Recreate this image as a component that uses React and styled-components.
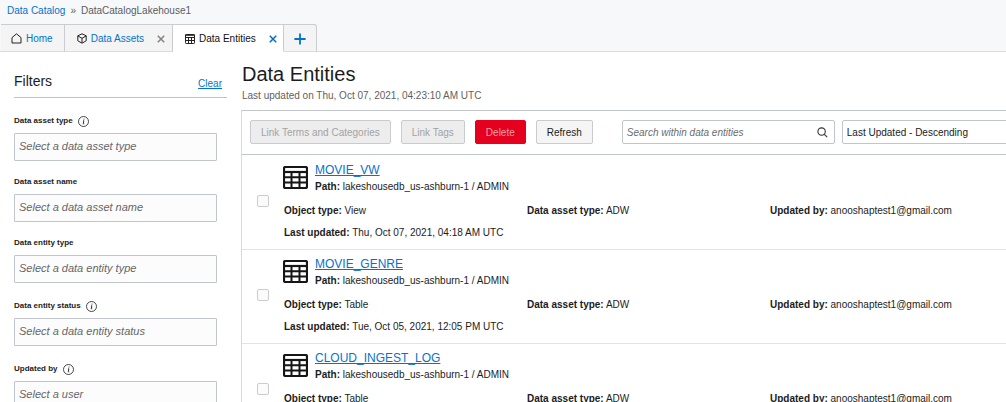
import React from "react";
import styled, { createGlobalStyle, css } from "styled-components";

const GlobalStyle = createGlobalStyle`
  *, *::before, *::after { box-sizing: border-box; }
  body {
    margin: 0;
    background: #ffffff;
    color: #1c1c1c;
    font: 10px/16px "Liberation Sans", Arial, sans-serif;
  }
  button, input, select { font: inherit; color: inherit; margin: 0; }
`;

const Page = styled.div`
  display: flex;
  flex-direction: column;
  height: 100vh;
  overflow: hidden;
`;

const Header = styled.header`
  background: #f6f8fa;
`;

const Breadcrumb = styled.nav`
  display: flex;
  gap: 5px;
  height: 24px;
  padding: 3px 7px 0;
  color: #5c5c5c;
`;

const Link = styled.a`
  color: #0572ce;
  text-decoration: ${(p) => (p.$underlined ? "underline" : "none")};
`;

const TabBar = styled.div`
  display: flex;
  height: 28px;
  padding-left: 1px;
  border-bottom: 1px solid #d9dbde;
`;

const Tab = styled.div`
  display: flex;
  align-items: center;
  height: 28px;
  padding: 1px ${(p) => p.$end || 11}px 0 ${(p) => p.$start || 10}px;
  background: #f4f4f4;
  border: 1px solid #c9ccd1;
  border-left: 0;
  border-bottom-color: #d9dbde;
  &:last-child {
    border-top-right-radius: 3px;
  }
  ${(p) =>
    p.$active &&
    css`
      background: #ffffff;
      border-bottom-color: #ffffff;
    `}
`;

const TabButton = styled.button`
  display: flex;
  align-items: center;
  gap: 4px;
  padding: 0;
  border: 0;
  background: none;
  color: ${(p) => (p.$active ? "#111111" : "#0572ce")};
  svg { color: #222222; }
`;

const IconButton = styled.button`
  display: flex;
  align-items: center;
  padding: 0;
  border: 0;
  background: none;
  color: ${(p) => p.$color || "#0572ce"};
  margin-left: ${(p) => p.$gap || 0}px;
`;

const Content = styled.div`
  display: flex;
  flex: 1;
  min-height: 0;
`;

const Sidebar = styled.aside`
  flex: 0 0 227px;
  padding: 18px 0 0 14px;
`;

const FiltersHead = styled.div`
  display: flex;
  justify-content: space-between;
  align-items: flex-end;
  height: 28px;
  padding: 0 5px 5px 0;
  border-bottom: 1px solid #bfc2c7;
  margin-bottom: 15px;
`;

const FiltersTitle = styled.h2`
  margin: 0;
  font-size: 14px;
  line-height: 22px;
  font-weight: 400;
`;

const Field = styled.div`
  margin-right: 10px;
  padding-bottom: ${(p) => p.$space || 13}px;
`;

const FieldLabel = styled.label`
  display: flex;
  align-items: center;
  gap: 5px;
  height: 16px;
  margin-bottom: 4px;
  font-size: 8px;
  font-weight: 700;
`;

const FieldInput = styled.input`
  display: block;
  width: 100%;
  height: 28px;
  padding: 0 4px 2px;
  border: 1px solid #c1c6cc;
  border-radius: 1px;
  background: #fcfcfc;
  font-size: 11px;
  &::placeholder { color: #666666; font-style: italic; opacity: 1; }
`;

const Main = styled.main`
  display: flex;
  flex-direction: column;
  flex: 1;
  min-width: 0;
  padding: 10px 0 0 14px;
`;

const Title = styled.h1`
  margin: 0;
  padding-left: 1px;
  font-size: 20px;
  line-height: 24px;
  font-weight: 400;
`;

const Subtitle = styled.p`
  margin: 0;
  padding: 2px 0 6px 1px;
  color: #5f5f5f;
`;

const Panel = styled.section`
  flex: 1;
  min-height: 0;
  border-top: 1px solid #c1c6cc;
  border-left: 1px solid #d5d9de;
`;

const Toolbar = styled.div`
  display: flex;
  gap: 10px;
  padding: 9px 0 10px 8px;
  border-bottom: 1px solid #c1c6cc;
`;

const tones = {
  plain: css`background: #f5f5f5; border-color: #c8ccd1; color: #1c1c1c;`,
  muted: css`background: #ededed; border-color: #c8ccd1; color: #a3a3a3;`,
  danger: css`background: #e5001f; border-color: #e5001f; color: #f2a0a8;`,
};

const Button = styled.button`
  flex: none;
  height: 24px;
  padding: 1px 10px 0;
  border: 1px solid;
  border-radius: 2px;
  white-space: nowrap;
  ${(p) => tones[p.$tone || "plain"]}
`;

const SearchGroup = styled.div`
  display: flex;
  flex: none;
  gap: 7px;
  margin-left: 19px;
`;

const SearchBox = styled.div`
  display: flex;
  align-items: center;
  width: 213px;
  height: 24px;
  padding: 0 6px 0 4px;
  border: 1px solid #c1c6cc;
  border-radius: 2px;
  background: #ffffff;
`;

const SearchInput = styled.input`
  flex: 1;
  min-width: 0;
  padding: 1px 0 0;
  border: 0;
  outline: 0;
  background: none;
  &::placeholder { color: #6b6b6b; font-style: italic; opacity: 1; }
`;

const SortSelect = styled.select`
  flex: none;
  width: 213px;
  height: 24px;
  padding: 1px 4px 0;
  border: 1px solid #c1c6cc;
  border-radius: 2px;
  background: #ffffff;
  appearance: none;
`;

const EntityList = styled.ul`
  margin: 0;
  padding: 1px 0 0;
  list-style: none;
`;

const EntityRow = styled.li`
  display: flex;
  align-items: center;
  height: 94px;
  padding: 0 0 4px 15px;
  border-bottom: 1px solid #e1e3e5;
`;

const Checkbox = styled.input`
  appearance: none;
  flex: none;
  width: 12px;
  height: 12px;
  margin: 0 14px 0 0;
  border: 1px solid #cccccc;
  border-radius: 2px;
  background: #fbfbfb;
`;

const Entity = styled.div`
  flex: 1;
  min-width: 0;
`;

const EntityHead = styled.div`
  display: flex;
  align-items: center;
  gap: 7px;
  height: 34px;
`;

const EntityName = styled.h3`
  margin: 0;
  font-size: 12px;
  line-height: 18px;
  font-weight: 400;
`;

const Details = styled.div`
  display: grid;
  grid-template-columns: repeat(3, 243px);
  row-gap: 6px;
  padding: 8px 0 0 1px;
  white-space: nowrap;
`;

const HomeIcon = () => (
  <svg width="11" height="11" viewBox="0 0 11 11" fill="none" stroke="currentColor" strokeLinejoin="round">
    <path d="M1 4.6 5.5.8 10 4.6V10H1z" />
  </svg>
);

const CubeIcon = () => (
  <svg width="10" height="11" viewBox="0 0 10 11" fill="none" stroke="currentColor" strokeWidth="1" strokeLinejoin="round">
    <path d="M5 .8 9.2 2.8V7.8L5 10.2.8 7.8V2.8zM.8 2.9 5 5.3 9.2 2.9M5 5.3V10" />
  </svg>
);

const TableIcon = ({ small }) =>
  small ? (
    <svg width="10" height="10" viewBox="0 0 10 10" fill="none" stroke="currentColor" strokeWidth="1">
      <rect x=".5" y=".5" width="9" height="9" rx=".7" />
      <path d="M0 1.2H10" strokeWidth="1.2" />
      <path d="M.5 3.5H9.5M.5 6.5H9.5M3.5 3V9.5M6.5 3V9.5" />
    </svg>
  ) : (
    <svg width="25" height="23" viewBox="0 0 25 23" fill="none" stroke="#161616">
      <rect x="1" y="1" width="23" height="21" rx="1.5" strokeWidth="2.2" />
      <path d="M1 6H24" strokeWidth="2.2" />
      <path d="M1 11.2H24M1 16.4H24M8.5 6V22M16.5 6V22" strokeWidth="2" />
    </svg>
  );

const CloseIcon = () => (
  <svg width="8" height="8" viewBox="0 0 8 8" fill="none" stroke="currentColor" strokeWidth="1.6">
    <path d="M.8.8 7.2 7.2M7.2.8.8 7.2" />
  </svg>
);

const PlusIcon = () => (
  <svg width="12" height="12" viewBox="0 0 12 12" fill="none" stroke="currentColor" strokeWidth="1.8">
    <path d="M6 .4V11.6M.4 6H11.6" />
  </svg>
);

const InfoIcon = () => (
  <svg width="11" height="11" viewBox="0 0 11 11" fill="none" stroke="#333333" strokeWidth=".9">
    <circle cx="5.5" cy="5.5" r="5" />
    <path d="M5 4.8H5.9L5.2 7.8H6.2" strokeWidth="1" />
    <circle cx="6" cy="3" r=".6" fill="#333333" stroke="none" />
  </svg>
);

const SearchIcon = () => (
  <svg width="11" height="11" viewBox="0 0 11 11" fill="none" stroke="#333333" strokeWidth="1.1">
    <circle cx="4.6" cy="4.6" r="3.7" />
    <path d="M7.3 7.3 10.2 10.2" />
  </svg>
);

const filters = [
  { id: "asset-type", label: "Data asset type", hint: "Select a data asset type", info: true },
  { id: "asset-name", label: "Data asset name", hint: "Select a data asset name" },
  { id: "entity-type", label: "Data entity type", hint: "Select a data entity type", space: 15 },
  { id: "entity-status", label: "Data entity status", hint: "Select a data entity status", info: true, space: 15 },
  { id: "updated-by", label: "Updated by", hint: "Select a user", info: true },
];

const entities = [
  { name: "MOVIE_VW", type: "View", updated: "Thu, Oct 07, 2021, 04:18 AM UTC" },
  { name: "MOVIE_GENRE", type: "Table", updated: "Tue, Oct 05, 2021, 12:05 PM UTC" },
  { name: "CLOUD_INGEST_LOG", type: "Table", updated: "Tue, Oct 05, 2021, 12:05 PM UTC" },
];

export default function App() {
  return (
    <Page>
      <GlobalStyle />
      <Header>
        <Breadcrumb aria-label="Breadcrumb">
          <Link href="#catalog">Data Catalog</Link>
          <span>»</span>
          <span>DataCatalogLakehouse1</span>
        </Breadcrumb>
        <TabBar>
          <Tab>
            <TabButton><HomeIcon />Home</TabButton>
          </Tab>
          <Tab $start={12} $end={7}>
            <TabButton><CubeIcon />Data Assets</TabButton>
            <IconButton $gap={13} $color="#858585" aria-label="Close Data Assets"><CloseIcon /></IconButton>
          </Tab>
          <Tab $active $start={12} $end={6}>
            <TabButton $active><TableIcon small />Data Entities</TabButton>
            <IconButton $gap={13} aria-label="Close Data Entities"><CloseIcon /></IconButton>
          </Tab>
          <Tab $end={10}>
            <IconButton aria-label="Add tab"><PlusIcon /></IconButton>
          </Tab>
        </TabBar>
      </Header>
      <Content>
        <Sidebar>
          <FiltersHead>
            <FiltersTitle>Filters</FiltersTitle>
            <Link $underlined href="#clear">Clear</Link>
          </FiltersHead>
          {filters.map((f) => (
            <Field key={f.id} $space={f.space}>
              <FieldLabel htmlFor={f.id}>
                {f.label}
                {f.info && <InfoIcon />}
              </FieldLabel>
              <FieldInput id={f.id} placeholder={f.hint} />
            </Field>
          ))}
        </Sidebar>
        <Main>
          <Title>Data Entities</Title>
          <Subtitle>Last updated on Thu, Oct 07, 2021, 04:23:10 AM UTC</Subtitle>
          <Panel>
            <Toolbar>
              <Button $tone="muted" disabled>Link Terms and Categories</Button>
              <Button $tone="muted" disabled>Link Tags</Button>
              <Button $tone="danger" disabled>Delete</Button>
              <Button>Refresh</Button>
              <SearchGroup>
                <SearchBox>
                  <SearchInput aria-label="Search within data entities" placeholder="Search within data entities" />
                  <SearchIcon />
                </SearchBox>
                <SortSelect aria-label="Sort by">
                  <option>Last Updated - Descending</option>
                </SortSelect>
              </SearchGroup>
            </Toolbar>
            <EntityList>
              {entities.map((e) => (
                <EntityRow key={e.name}>
                  <Checkbox type="checkbox" aria-label={`Select ${e.name}`} />
                  <Entity>
                    <EntityHead>
                      <TableIcon />
                      <div>
                        <EntityName><Link $underlined href={`#${e.name}`}>{e.name}</Link></EntityName>
                        <div><b>Path:</b> lakeshousedb_us-ashburn-1 / ADMIN</div>
                      </div>
                    </EntityHead>
                    <Details>
                      <span><b>Object type:</b> {e.type}</span>
                      <span><b>Data asset type:</b> ADW</span>
                      <span><b>Updated by:</b> anooshaptest1@gmail.com</span>
                      <span><b>Last updated:</b> {e.updated}</span>
                    </Details>
                  </Entity>
                </EntityRow>
              ))}
            </EntityList>
          </Panel>
        </Main>
      </Content>
    </Page>
  );
}
